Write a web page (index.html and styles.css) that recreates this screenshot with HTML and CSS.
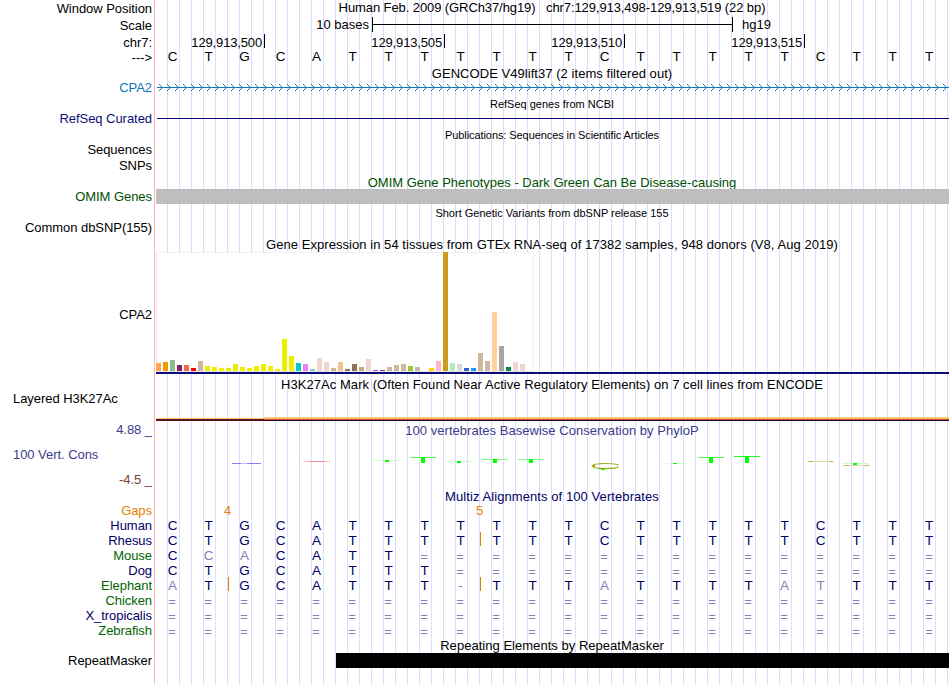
FILE: index.html
```
<!DOCTYPE html>
<html lang="en">
<head>
    <meta charset="UTF-8">
    <meta name="viewport" content="width=device-width, initial-scale=1.0">
    <title>Human chr7:129,913,498-129,913,519</title>
    <link rel="stylesheet" href="styles.css">
</head>
<body>
    <div class="browser">
        <!-- ruler -->
        <div class="label low">Window Position</div>
        <div class="title t-position">Human Feb. 2009 (GRCh37/hg19) &nbsp; chr7:129,913,498-129,913,519 (22 bp)</div>

        <div class="label low">Scale</div>
        <div class="scale">
            <span class="scale-size">10 bases</span>
            <div class="scale-bar"></div>
            <span class="scale-db">hg19</span>
        </div>

        <div class="label">chr7:</div>
        <div class="coords">
            <div class="coord first">129,913,500</div>
            <div class="coord">129,913,505</div>
            <div class="coord">129,913,510</div>
            <div class="coord">129,913,515</div>
        </div>

        <div class="label low">---&gt;</div>
        <div class="bases ruler" data-seq="CTGCATTTTTTTCTTTTTCTTT"></div>

        <!-- genes -->
        <div class="title t-gencode">GENCODE V49lift37 (2 items filtered out)</div>
        <div class="label gencode">CPA2</div>
        <div class="gene">
            <svg width="792" height="7">
                <defs>
                    <pattern id="strand" width="8" height="7" patternUnits="userSpaceOnUse">
                        <path d="M2 0h1v1h-1zM3 1h1v1h-1zM4 2h1v1h-1zM5 3h1v1h-1zM4 4h1v1h-1zM3 5h1v1h-1zM2 6h1v1h-1z" fill="#0c78b4"/>
                    </pattern>
                </defs>
                <rect width="792" height="7" fill="url(#strand)"/>
                <rect y="3" width="792" height="1" fill="#0c78b4"/>
            </svg>
        </div>

        <div class="title small">RefSeq genes from NCBI</div>
        <div class="label refseq">RefSeq Curated</div>
        <div class="refseq-line"></div>

        <div class="title small t-pubs">Publications: Sequences in Scientific Articles</div>
        <div class="label">Sequences</div>
        <div class="empty"></div>
        <div class="label">SNPs</div>
        <div class="empty"></div>

        <div class="title omim">OMIM Gene Phenotypes - Dark Green Can Be Disease-causing</div>
        <div class="label omim">OMIM Genes</div>
        <div class="block grey"></div>

        <div class="title small">Short Genetic Variants from dbSNP release 155</div>
        <div class="label">Common dbSNP(155)</div>
        <div class="empty"></div>

        <!-- expression -->
        <div class="title t-gtex">Gene Expression in 54 tissues from GTEx RNA-seq of 17382 samples, 948 donors (V8, Aug 2019)</div>
        <div class="label gtex-label">CPA2</div>
        <div class="gtex">
            <div class="gtex-bars"></div>
        </div>

        <!-- regulation -->
        <div class="title t-h3k">H3K27Ac Mark (Often Found Near Active Regulatory Elements) on 7 cell lines from ENCODE</div>
        <div class="label left">Layered H3K27Ac</div>
        <div class="h3k">
            <div class="h3k-low"></div>
            <div class="h3k-high"></div>
        </div>

        <!-- conservation -->
        <div class="cons-labels">
            <div class="label cons">4.88 _</div>
            <div class="label left cons">100 Vert. Cons</div>
            <div class="label cons-min">-4.5 _</div>
        </div>
        <div class="title cons t-cons">100 vertebrates Basewise Conservation by PhyloP</div>
        <div class="logo">
            <svg width="794" height="51" viewBox="155 438 794 51" shape-rendering="crispEdges">
                <g fill="#8484f8"><rect x="232" y="463" width="9" height="1"/><rect x="247" y="463" width="14" height="1"/></g>
                <rect x="241" y="463" width="6" height="1" fill="#c4c4fc"/>
                <rect x="303" y="461" width="6" height="1" fill="#ffc4c4"/>
                <rect x="309" y="461" width="16" height="1" fill="#f88c8c"/>
                <rect x="325" y="461" width="5" height="1" fill="#ffc4c4"/>
                <g fill="#c8fcc8">
                    <rect x="374" y="460" width="26" height="1"/>
                    <rect x="446" y="461" width="26" height="1"/>
                    <rect x="662" y="463" width="26" height="1" opacity=".6"/>
                    <rect x="842" y="463" width="26" height="1"/>
                    <rect x="591" y="469" width="26" height="1" opacity=".4"/>
                </g>
                <g fill="#50ff50">
                    <rect x="410" y="457" width="26" height="1"/>
                    <rect x="482" y="459" width="26" height="1" fill="#84ff84"/>
                    <rect x="518" y="459" width="26" height="1" fill="#84ff84"/>
                    <rect x="698" y="457" width="26" height="1"/>
                    <rect x="734" y="456" width="26" height="1" fill="#20ff20"/>
                </g>
                <g fill="#00ff00">
                    <rect x="385" y="460" width="4" height="2"/>
                    <rect x="421" y="457" width="4" height="6"/>
                    <rect x="457" y="461" width="4" height="2"/>
                    <rect x="493" y="459" width="4" height="4"/>
                    <rect x="529" y="459" width="4" height="4"/>
                    <rect x="601" y="469" width="4" height="1"/>
                    <rect x="673" y="463" width="4" height="1"/>
                    <rect x="709" y="457" width="4" height="6"/>
                    <rect x="745" y="456" width="4" height="7"/>
                    <rect x="853" y="463" width="4" height="2"/>
                </g>
                <path d="M618.5 465Q614 463.500 605 463.500C597 463.500 592.500 464.300 592.500 466C592.500 467.700 597 468.500 605 468.500Q615 468.500 618.500 467" fill="none" stroke="#a4a40c" stroke-width="1.200" shape-rendering="auto"/>
                <path d="M591 466l4-2v4z" fill="#a4a40c" shape-rendering="auto"/>
                <g fill="#dcdcac">
                    <rect x="807" y="461" width="27" height="1"/>
                    <rect x="843" y="465" width="27" height="1"/>
                </g>
                <g fill="#b8b85c">
                    <rect x="808" y="461" width="5" height="1"/>
                    <rect x="844" y="465" width="5" height="1"/>
                    <rect x="829" y="461" width="4" height="1"/>
                    <rect x="865" y="465" width="4" height="1"/>
                </g>
            </svg>
        </div>

        <!-- alignments: lower case marks a base that differs from human -->
        <div class="title multiz t-multiz">Multiz Alignments of 100 Vertebrates</div>
        <div class="label gaps">Gaps</div>
        <div class="gap-sizes"><span>4</span><span>5</span></div>
        <div class="label multiz">Human</div>
        <div class="bases" data-seq="CTGCATTTTTTTCTTTTTCTTT"></div>
        <div class="label multiz">Rhesus</div>
        <div class="bases" data-seq="CTGCATTTTTTTCTTTTTCTTT" data-inserts="8"></div>
        <div class="label near">Mouse</div>
        <div class="bases" data-seq="CcaCATT==============="></div>
        <div class="label multiz">Dog</div>
        <div class="bases" data-seq="CTGCATTT=============="></div>
        <div class="label near">Elephant</div>
        <div class="bases" data-seq="aTGCATTT-TTTaTTTTatTTT" data-inserts="1,8"></div>
        <div class="label near">Chicken</div>
        <div class="bases" data-seq="======================"></div>
        <div class="label multiz">X_tropicalis</div>
        <div class="bases" data-seq="======================"></div>
        <div class="label near">Zebrafish</div>
        <div class="bases" data-seq="======================"></div>

        <!-- repeats -->
        <div class="title t-repeat">Repeating Elements by RepeatMasker</div>
        <div class="label">RepeatMasker</div>
        <div class="block repeat"></div>
    </div>

    <script>
        // one cell for each base of a sequence row
        document.querySelectorAll('.bases').forEach(row => {
            const inserts = (row.dataset.inserts || '').split(',');
            [...row.dataset.seq].forEach((base, i) => {
                const cell = document.createElement('span');
                cell.textContent = base.toUpperCase();
                if (base === '=') cell.classList.add('diff', 'none');
                else if (base !== base.toUpperCase() || base === '-') cell.classList.add('diff');
                if (inserts.includes(String(i))) cell.classList.add('insert');
                row.appendChild(cell);
            });
        });

        // GTEx tissues: height in px, colour
        const tissues = [
            [8, '#ffa54f'], [9, '#ee9a00'], [11, '#8fbc8f'], [6, '#8b1c62'], [6, '#ee6a50'], [3, '#ff0000'],
            [10, '#cdb79e'], [5, '#eeee00'], [4, '#eeee00'], [3, '#eeee00'], [3, '#eeee00'], [7, '#eeee00'],
            [4, '#eeee00'], [3, '#eeee00'], [5, '#eeee00'], [7, '#eeee00'], [5, '#eeee00'], [2, '#eeee00'],
            [32, '#eeee00'], [15, '#eeee00'], [8, '#00cdcd'], [7, '#ee82ee'], [2, '#9ac0cd'], [13, '#eed5d2'],
            [9, '#eed5d2'], [3, '#cdb79e'], [9, '#eec591'], [2, '#8b7355'], [7, '#8b7355'], [4, '#cdaa7d'],
            [12, '#eed5d2'], [1, '#b452cd'], [1, '#7a378b'], [4, '#cdb79e'], [6, '#cdb79e'], [7, '#cdb79e'],
            [5, '#9acd32'], [4, '#cdb79e'], [0, '#7a67ee'], [3, '#ffd700'], [10, '#ffb6c1'], [119, '#cd9b1d'],
            [8, '#b4eeb4'], [7, '#d9d9d9'], [3, '#3a5fcd'], [3, '#1e90ff'], [18, '#cdb79e'], [10, '#cdb79e'],
            [59, '#ffd39b'], [25, '#a6a6a6'], [4, '#008b45'], [9, '#eed5d2'], [7, '#eed5d2'], [0, '#ff00ff']
        ];
        const bars = document.querySelector('.gtex-bars');
        tissues.forEach(([height, color]) => {
            const bar = document.createElement('div');
            bar.style.height = height + 'px';
            bar.style.background = color;
            bars.appendChild(bar);
        });
    </script>
</body>
</html>
```
FILE: styles.css
```
body {
    margin: 0;
    background: #fff;
    color: #000;
    font: 13px/15px "Liberation Sans", Arial, sans-serif;
    overflow: hidden;
}
.browser {
    display: grid;
    grid-template-columns: 155px 794px;
    /* ruler, gencode, refseq, pubs, omim, dbsnp, gtex, h3k27ac, phylop, multiz, repeats */
    grid-template-rows:
        17px 18px 14px 17px
        14px 16px
        15px 16px
        15px 16px 17px
        14px 16px
        15px 17px
        15px 125px
        14px 32px
        15px 51px
        14px repeat(9, 15px)
        15px 31px;
    width: 949px;
    height: 684px;
    /* guide lines every third of a base */
    background:
        linear-gradient(#ffb4b4, #ffb4b4) 154px 0 / 1px 100% no-repeat,
        repeating-linear-gradient(to right, transparent 0, transparent 11px, #dcdcff 11px, #dcdcff 12px) 156px 0 no-repeat;
}
.label {
    grid-column: 1;
    padding-right: 3px;
    letter-spacing: -0.05px;
    text-align: right;
    white-space: nowrap;
}
.title {
    grid-column: 2;
    text-align: center;
    white-space: nowrap;
}
.low {
    padding-top: 1px;
}
.left {
    padding-left: 13px;
    text-align: left;
}
.small {
    padding-top: 1px;
    font-size: 11px;
    line-height: 14px;
}
.t-position {
    letter-spacing: -0.09px;
}
.t-gencode, .t-gtex, .t-h3k {
    letter-spacing: 0.05px;
}
.t-pubs {
    letter-spacing: -0.08px;
}
.t-cons, .t-repeat {
    letter-spacing: 0.03px;
}
.t-multiz {
    letter-spacing: 0.08px;
}

/* ruler */
.scale {
    display: flex;
}
.scale-size {
    width: 217px;
    box-sizing: border-box;
    padding-right: 3px;
    text-align: right;
}
.scale-bar {
    width: 359px;
    height: 15px;
    border: solid #000;
    border-width: 0 1px;
    background: linear-gradient(#000, #000) 0 7px / 100% 1px no-repeat;
}
.scale-db {
    padding-left: 9px;
}
.coords {
    display: flex;
    margin-top: -1px;
    letter-spacing: -0.15px;
}
.coord {
    width: 180px;
    height: 14px;
    box-sizing: border-box;
    padding: 1px 2px 0 0;
    border-right: 1px solid #000;
    text-align: right;
}
.coord.first {
    width: 110px;
}
.bases {
    display: flex;
    margin-left: -0.5px;
    color: #000064;
    font-size: 13.5px;
}
.bases.ruler {
    color: #000;
}
.bases span {
    position: relative;
    width: 36px;
    text-align: center;
}
.bases span:last-child {
    left: 0.5px;
}
.bases .diff {
    color: #8282b4;
}
.bases .none {
    top: 1px;
    left: -0.5px;
    font-size: 13px;
}
.bases .insert::after {
    content: '';
    position: absolute;
    top: -1px;
    right: -2.5px;
    width: 1px;
    height: 14px;
    background: #e68200;
}

/* genes */
.gencode {
    color: #0c78b4;
}
.gene {
    padding: 4px 0 0 2px;
}
.gene svg {
    display: block;
}
.refseq {
    color: #0c0c78;
}
.refseq-line {
    height: 1px;
    margin: 7px 0 0 2px;
    background: #0c0c78;
}
.omim {
    color: #005000;
}
.block {
    height: 15px;
    margin-left: 1px;
}
.grey {
    background: #bebebe;
}
.repeat {
    margin-left: 181px;
    background: #000;
}

/* expression */
.gtex-label {
    padding-top: 55px;
}
.gtex {
    height: 120px;
    margin-left: 1px;
    border-bottom: 2px solid #0c0c78;
}
.gtex-bars {
    display: flex;
    align-items: flex-end;
    gap: 2px;
    width: 378px;
    height: 120px;
    box-sizing: border-box;
    padding-bottom: 1px;
    background: #fff;
    box-shadow: inset -1px 1px #f2f2f2, inset 1px -1px #e6e6e6;
}
.gtex-bars div {
    flex: 0 0 5px;
}

/* regulation */
.h3k {
    display: flex;
    align-items: flex-end;
    height: 30px;
    margin-left: 1px;
}
.h3k-low {
    width: 108px;
    height: 3px;
    background: linear-gradient(#f8c870 1px, #581420 1px);
}
.h3k-high {
    flex: 1;
    height: 4px;
    background: linear-gradient(#f8c870 2px, #e03c3c 2px, #e03c3c 3px, #280c20 3px);
}

/* conservation */
.cons-labels {
    grid-column: 1;
    grid-row: 20 / span 2;
    display: flex;
    flex-direction: column;
    gap: 10px;
    margin-top: -1px;
}
.cons {
    color: #3c3c8c;
}
.cons-min {
    color: #783c3c;
}
.logo {
    grid-column: 2;
}
.logo svg {
    display: block;
}

/* alignments */
.multiz {
    color: #000064;
}
.near {
    color: #006400;
}
.gaps, .gap-sizes {
    color: #e68200;
}
.gap-sizes {
    display: flex;
    padding-left: 54.5px;
}
.gap-sizes span {
    width: 36px;
    text-align: center;
}
.gap-sizes span + span {
    margin-left: 216px;
}
```
